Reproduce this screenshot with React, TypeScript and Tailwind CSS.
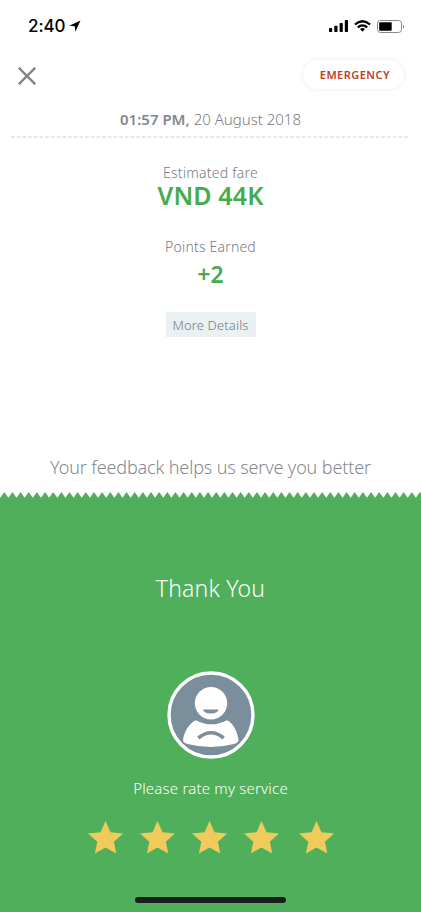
import React from "react";

const STAR = "M17.5 0 L22.5 11.3 L35 12.6 L25.9 20.8 L28.3 32.4 L17.5 26.6 L6.9 32.4 L9.3 20.8 L0 12.6 L12.6 11.3 Z";
const TOOTH = 8.15;

function Star() {
  return (
    <svg width="35" height="33" viewBox="0 0 35 33" fill="#f0cb5c">
      <path d={STAR} />
    </svg>
  );
}

function StatusBar() {
  return (
    <div className="flex h-[52px] items-center justify-between pl-[28px] pr-[16px] text-black">
      <div className="flex items-center gap-[4px]">
        <span className="font-['Inter'] text-[17px] leading-[20px] font-medium tracking-[-0.1px]">2:40</span>
        <svg width="12" height="12" viewBox="0 0 12 12">
          <path d="M11.5 .5 L.3 5.7 L5.8 6.2 L6.3 11.7 Z" />
        </svg>
      </div>
      <div className="flex items-center gap-[6px]">
        <svg width="19" height="12" viewBox="0 0 19 12">
          <rect x="0" y="8" width="3.2" height="4" rx=".8" />
          <rect x="5.3" y="5.8" width="3.2" height="6.2" rx=".8" />
          <rect x="10.6" y="3" width="3.2" height="9" rx=".8" />
          <rect x="15.8" y="0" width="3.2" height="12" rx=".8" />
        </svg>
        <svg width="17" height="12" viewBox="0 0 17 12" fill="none" stroke="#000" strokeWidth="2.2">
          <path d="M.9 4.5 Q8.5 -2 16.1 4.5" />
          <path d="M3.8 7.4 Q8.5 3.5 13.2 7.4" />
          <path d="M6 9 Q8.5 7.1 11 9 L8.5 11.8 Z" fill="#000" stroke="none" />
        </svg>
        <svg width="28" height="13" viewBox="0 0 28 13">
          <rect x=".5" y=".5" width="24" height="12" rx="3" fill="none" stroke="#888" />
          <rect x="2.2" y="2.2" width="12.5" height="8.6" rx="1" />
          <path d="M26 4.4 Q28 6.5 26 8.6 Z" fill="#777" />
        </svg>
      </div>
    </div>
  );
}

function Avatar() {
  return (
    <svg width="88" height="88" viewBox="0 0 88 88">
      <circle cx="44" cy="44" r="42" fill="#7b8e9b" stroke="#fff" strokeWidth="3.4" />
      <circle cx="44" cy="32.2" r="16.2" fill="#fff" />
      <path d="M36 38.5 H51.5 Q50.5 42.4 43.8 42.4 Q37 42.4 36 38.5 Z" fill="#7b8e9b" />
      <path d="M29 49.2 Q44 57.5 60 49.2 C66.5 52 70.5 61 71.5 69 Q71.5 71.5 67 73 Q44 79 20.5 73 Q16 71.5 16 69 C17 61 22 52 29 49.2 Z" fill="#fff" />
      <path d="M31.3 67 Q44 56.5 56.7 67" fill="none" stroke="#7b8e9b" strokeWidth="3.6" />
    </svg>
  );
}

export default function App() {
  let edge = "M0 8 ";
  for (let i = -1; i < 53; i++) {
    const x = 4.3 + i * TOOTH;
    edge += `L${x} 0 L${x + TOOTH / 2} 5.8 `;
  }
  edge += "L430 8 Z";
  return (
    <div className="flex h-[912px] w-[421px] flex-col overflow-hidden bg-white font-['Noto_Sans',sans-serif] text-[#777a82]">
      <StatusBar />
      <div className="flex h-[48px] items-start justify-between pt-[8px] pr-[17px] pl-[18px]">
        <svg className="mt-[7px]" width="18" height="18" viewBox="0 0 18 18" stroke="#85868c" strokeWidth="2.4">
          <path d="M.8 .8 L17.2 17.2 M17.2 .8 L.8 17.2" />
        </svg>
        <button className="h-[29px] w-[101px] rounded-full bg-white pl-[3px] text-[11px] leading-[29px] font-semibold tracking-[0.48px] whitespace-nowrap text-[#bd3e22] shadow-[0_0_4px_0_#fae3df]">EMERGENCY</button>
      </div>
      <div className="h-[36px] text-center text-[15px] leading-[38px]">
        <span className="inline-block whitespace-nowrap"><b className="font-semibold text-[#85878e]">01:57 PM,</b> <span className="font-light">20 August 2018</span></span>
      </div>
      <svg className="ml-[11px] shrink-0" width="397" height="2" viewBox="0 0 397 2">
        <path d="M0 1 H397" stroke="#dedfe1" strokeWidth="1.7" strokeDasharray="3.6 2.1" />
      </svg>
      <div className="flex h-[354px] flex-col items-center pt-[25px]">
        <div className="text-[14px] leading-[20px] font-light tracking-[0.24px]">Estimated fare</div>
        <div className="text-[25px] leading-[25px] font-semibold tracking-[0.1px] text-[#45ab4f]">VND 44K</div>
        <div className="mt-[29px] text-[14px] leading-[20px] font-light tracking-[0.2px]">Points Earned</div>
        <div className="mt-[3px] text-[23px] leading-[28px] font-semibold text-[#45ab4f]">+2</div>
        <div className="mt-[24px] h-[25px] w-[90px] bg-[#ebf0f3] text-center text-[13px] leading-[26px] font-light tracking-[0.15px]">More Details</div>
        <div className="mt-[116px] whitespace-nowrap text-[18px] leading-[28px] font-light tracking-[-0.14px] text-[#868890]">Your feedback helps us serve you better</div>
      </div>
      <svg className="shrink-0" width="421" height="8" viewBox="0 0 421 8" fill="#50af5b">
        <path d={edge} />
      </svg>
      <div className="flex flex-1 flex-col items-center bg-[#50af5b] text-white">
        <div className="mt-[72px] text-[23px] leading-[32px] font-light tracking-[0.2px]">Thank You</div>
        <div className="mt-[67px] h-[88px]"><Avatar /></div>
        <div className="mt-[19px] text-[15px] leading-[20px] font-light tracking-[0.2px]">Please rate my service</div>
        <div className="mt-[23px] flex w-full gap-[17px] pl-[87.5px]">
          <Star /><Star /><Star /><Star /><span className="ml-[3px]"><Star /></span>
        </div>
        <div className="mt-auto mb-[9px] h-[6px] w-[151px] rounded-full bg-[#1c1d1c]" />
      </div>
    </div>
  );
}
